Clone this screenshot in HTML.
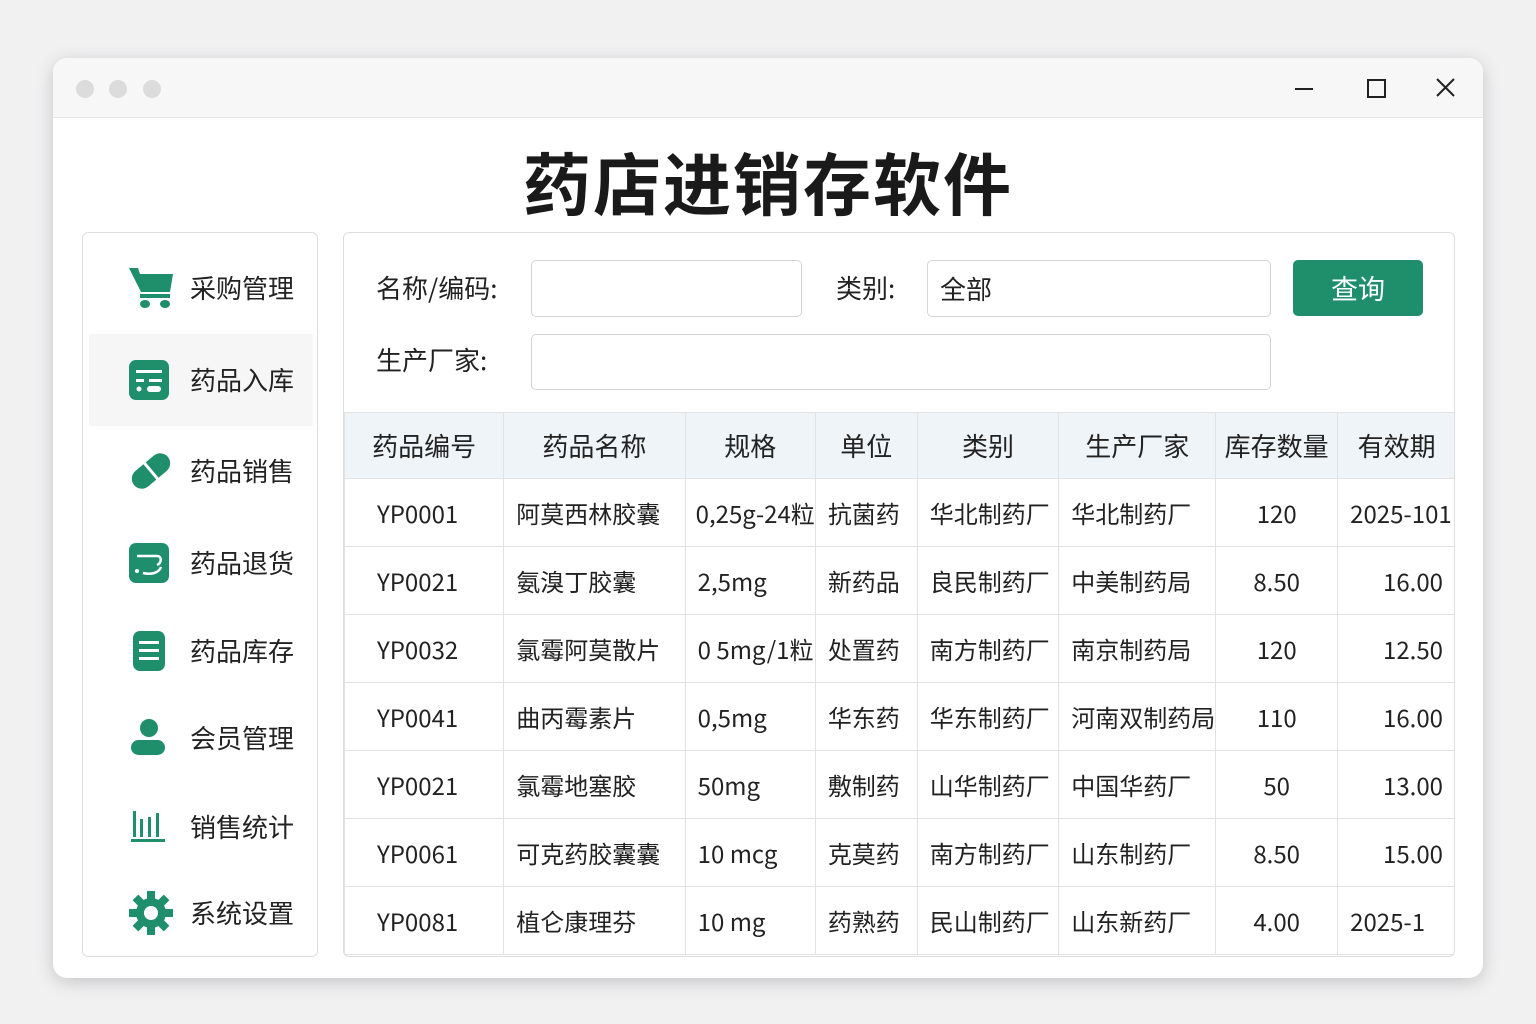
<!DOCTYPE html>
<html><head><meta charset="utf-8"><style>
*{margin:0;padding:0;box-sizing:border-box}
body{width:1536px;height:1024px;background:#f1f1f2;font-family:"Noto Sans CJK SC","Liberation Sans",sans-serif;color:#222;position:relative;overflow:hidden}
.win{position:absolute;left:53px;top:58px;width:1430px;height:920px;background:#fff;border-radius:14px;box-shadow:0 4px 18px rgba(0,0,0,.18);overflow:hidden}
.tb{height:60px;background:#f7f7f7;border-bottom:1px solid #e6e6e6;position:relative}
.dot{position:absolute;top:22px;width:18px;height:18px;border-radius:50%;background:#dcdcdc}
.title{position:absolute;left:0;width:100%;top:75px;line-height:96px;text-align:center;font-size:68px;font-weight:bold;letter-spacing:2px;color:#1a1a1a}
.side{position:absolute;left:29px;top:174px;width:236px;height:725px;border:1px solid #dedede;border-radius:6px}
.item{position:absolute;left:0;width:234px;height:60px;display:flex;align-items:center}
.item svg{position:absolute;left:44px}
.item span{position:absolute;left:107px;font-size:26px;line-height:60px}
.main{position:absolute;left:290px;top:174px;width:1112px;height:725px;border:1px solid #dedede;border-radius:6px;overflow:hidden}
.lbl{position:absolute;font-size:26px;line-height:36px}
.inp{position:absolute;border:1px solid #d4d4d4;border-radius:5px;background:#fff}
.btn{position:absolute;left:949px;top:27px;width:130px;height:56px;background:#1e8f6a;border-radius:5px;color:#fff;font-size:27px;text-align:center;line-height:56px}
table{position:absolute;left:0;top:179px;border-collapse:collapse;font-size:24px;width:1112px}
td,th{border:1px solid #e2e2e2;height:68px;white-space:nowrap;overflow:hidden;font-weight:normal;line-height:30px}
th{background:#eef4f8;height:66px;font-size:26px}
td{padding-left:12px}
</style></head><body>
<div class="win">
<div class="tb">
<div class="dot" style="left:23px"></div><div class="dot" style="left:56px"></div><div class="dot" style="left:90px"></div>
<svg style="position:absolute;left:1240px;top:18px" width="170" height="26" viewBox="0 0 170 26"><line x1="2" y1="13" x2="20" y2="13" stroke="#222" stroke-width="2"/><rect x="75" y="4" width="17" height="17" fill="none" stroke="#222" stroke-width="2"/><path d="M144 3L161 20M161 3L144 20" stroke="#222" stroke-width="2"/></svg>
</div>
<div class="title">药店进销存软件</div>
<div class="side">
<div style="position:absolute;left:6px;top:101px;width:224px;height:92px;background:#f6f6f6"></div>
<div class="item" style="top:25px"><svg width="48" height="48" viewBox="0 0 48 48"><path d="M2 4h9l2 6h33l-3 18H14z" fill="#1e8f6a"/><rect x="13" y="30" width="30" height="4" fill="#1e8f6a"/><ellipse cx="18" cy="40" rx="5" ry="4" fill="#1e8f6a"/><ellipse cx="38" cy="40" rx="5" ry="4" fill="#1e8f6a"/></svg><span>采购管理</span></div>
<div class="item" style="top:117px"><svg width="44" height="44" viewBox="0 0 44 44"><rect x="2" y="2" width="40" height="40" rx="7" fill="#1e8f6a"/><rect x="9" y="12" width="26" height="3" fill="#fff"/><rect x="9" y="21" width="8" height="3" fill="#fff"/><rect x="22" y="21" width="13" height="3" fill="#fff"/><circle cx="12" cy="31" r="2.5" fill="#fff"/><rect x="20" y="28" width="14" height="6" rx="3" fill="#fff"/></svg><span>药品入库</span></div>
<div class="item" style="top:208px"><svg width="48" height="48" viewBox="0 0 48 48"><g transform="rotate(-40 24 24)"><rect x="2" y="14" width="44" height="20" rx="10" fill="#1e8f6a"/><line x1="24" y1="13" x2="24" y2="35" stroke="#fff" stroke-width="3"/></g></svg><span>药品销售</span></div>
<div class="item" style="top:300px"><svg width="44" height="44" viewBox="0 0 44 44"><rect x="2" y="2" width="40" height="40" rx="7" fill="#1e8f6a"/><path d="M10 15h20c5 0 5 7 0 9M16 32c8 2 16 0 18-6" stroke="#fff" stroke-width="2.5" fill="none"/><circle cx="10" cy="30" r="2" fill="#fff"/></svg><span>药品退货</span></div>
<div class="item" style="top:388px"><svg width="44" height="44" viewBox="0 0 44 44"><rect x="6" y="2" width="32" height="40" rx="7" fill="#1e8f6a"/><rect x="12" y="12" width="20" height="3" fill="#fff"/><rect x="12" y="20" width="20" height="3" fill="#fff"/><rect x="12" y="28" width="20" height="3" fill="#fff"/></svg><span>药品库存</span></div>
<div class="item" style="top:475px"><svg width="44" height="44" viewBox="0 0 44 44"><ellipse cx="22" cy="12" rx="9" ry="9" fill="#1e8f6a"/><rect x="4" y="24" width="34" height="15" rx="7.5" fill="#1e8f6a"/></svg><span>会员管理</span></div>
<div class="item" style="top:564px"><svg width="44" height="44" viewBox="0 0 44 44"><rect x="6" y="6" width="3" height="26" fill="#1e8f6a"/><rect x="13" y="14" width="3" height="18" fill="#1e8f6a"/><rect x="21" y="12" width="3" height="20" fill="#1e8f6a"/><rect x="29" y="8" width="3" height="24" fill="#1e8f6a"/><rect x="4" y="34" width="34" height="3" fill="#1e8f6a"/></svg><span>销售统计</span></div>
<div class="item" style="top:650px"><svg width="48" height="48" viewBox="0 0 48 48"><g fill="#1e8f6a"><circle cx="24" cy="24" r="15"/><g id="t"><rect x="20" y="2" width="8" height="10"/><rect x="20" y="36" width="8" height="10"/></g><use href="#t" transform="rotate(45 24 24)"/><use href="#t" transform="rotate(90 24 24)"/><use href="#t" transform="rotate(135 24 24)"/></g><circle cx="24" cy="24" r="7" fill="#fff"/></svg><span>系统设置</span></div>
</div>
<div class="main">
<div class="lbl" style="left:32px;top:37px">名称/编码:</div>
<div class="inp" style="left:187px;top:27px;width:271px;height:57px"></div>
<div class="lbl" style="left:492px;top:37px">类别:</div>
<div class="inp" style="left:583px;top:27px;width:344px;height:57px"><span style="position:absolute;left:12px;top:10px;font-size:26px;line-height:36px">全部</span></div>
<div class="btn">查询</div>
<div class="lbl" style="left:32px;top:109px">生产厂家:</div>
<div class="inp" style="left:187px;top:101px;width:740px;height:56px"></div>
<table>
<colgroup><col style="width:162px"><col style="width:183px"><col style="width:127px"><col style="width:103px"><col style="width:142px"><col style="width:154px"><col style="width:123px"><col style="width:118px"></colgroup>
<tr><th>药品编号</th><th>药品名称</th><th>规格</th><th>单位</th><th>类别</th><th>生产厂家</th><th>库存数量</th><th>有效期</th></tr>
<tr><td style="padding-left:32px">YP0001</td><td>阿莫西林胶囊</td><td style="padding-left:10px">0,25g-24粒</td><td>抗菌药</td><td>华北制药厂</td><td>华北制药厂</td><td style="text-align:center;padding:0">120</td><td>2025-101</td></tr>
<tr><td style="padding-left:32px">YP0021</td><td>氨溴丁胶囊</td><td>2,5mg</td><td>新药品</td><td>良民制药厂</td><td>中美制药局</td><td style="text-align:center;padding:0">8.50</td><td style="text-align:right;padding-right:12px">16.00</td></tr>
<tr><td style="padding-left:32px">YP0032</td><td>氯霉阿莫散片</td><td>0 5mg/1粒</td><td>处置药</td><td>南方制药厂</td><td>南京制药局</td><td style="text-align:center;padding:0">120</td><td style="text-align:right;padding-right:12px">12.50</td></tr>
<tr><td style="padding-left:32px">YP0041</td><td>曲丙霉素片</td><td>0,5mg</td><td>华东药</td><td>华东制药厂</td><td>河南双制药局</td><td style="text-align:center;padding:0">110</td><td style="text-align:right;padding-right:12px">16.00</td></tr>
<tr><td style="padding-left:32px">YP0021</td><td>氯霉地塞胶</td><td>50mg</td><td>敷制药</td><td>山华制药厂</td><td>中国华药厂</td><td style="text-align:center;padding:0">50</td><td style="text-align:right;padding-right:12px">13.00</td></tr>
<tr><td style="padding-left:32px">YP0061</td><td>可克药胶囊囊</td><td>10 mcg</td><td>克莫药</td><td>南方制药厂</td><td>山东制药厂</td><td style="text-align:center;padding:0">8.50</td><td style="text-align:right;padding-right:12px">15.00</td></tr>
<tr><td style="padding-left:32px">YP0081</td><td>植仑康理芬</td><td>10 mg</td><td>药熟药</td><td>民山制药厂</td><td>山东新药厂</td><td style="text-align:center;padding:0">4.00</td><td>2025-1</td></tr>
</table>
</div>
</div>
</body></html>
